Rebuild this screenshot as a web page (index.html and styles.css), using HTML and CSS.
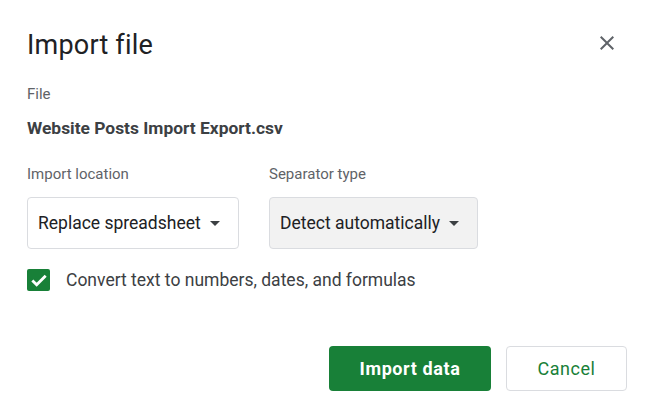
FILE: index.html
```html
<!DOCTYPE html>
<html>
<head>
<meta charset="utf-8">
<link rel="stylesheet" href="styles.css">
</head>
<body>
<div class="dialog">
  <div class="header">
    <h1 class="title">Import file</h1>
    <button class="close" aria-label="Close">
      <svg width="24" height="24" viewBox="0 0 24 24"><path d="M19 6.41L17.59 5 12 10.59 6.41 5 5 6.41 10.59 12 5 17.59 6.41 19 12 13.41 17.59 19 19 17.59 13.41 12z" fill="#5f6368"/></svg>
    </button>
  </div>
  <div class="label file-label">File</div>
  <div class="filename">Website Posts Import Export.csv</div>
  <div class="fields">
    <div class="field">
      <div class="label">Import location</div>
      <div class="select select-1">
        <span>Replace spreadsheet</span>
        <span class="arrow"></span>
      </div>
    </div>
    <div class="field">
      <div class="label">Separator type</div>
      <div class="select select-2">
        <span>Detect automatically</span>
        <span class="arrow"></span>
      </div>
    </div>
  </div>
  <label class="check-row">
    <span class="checkbox">
      <svg width="20" height="20" viewBox="0 0 24 24"><path d="M4 12.5l5.2 5.2L20 6.8" fill="none" stroke="#fff" stroke-width="3.4"/></svg>
    </span>
    <span class="check-text">Convert text to numbers, dates, and formulas</span>
  </label>
  <div class="actions">
    <button class="btn primary">Import data</button>
    <button class="btn secondary">Cancel</button>
  </div>
</div>
</body>
</html>
```

FILE: styles.css
```css
html, body {
  margin: 0;
  padding: 0;
  background: #fff;
}
body {
  font-family: Roboto, "Liberation Sans", Arial, sans-serif;
  color: #202124;
}
.dialog {
  width: 651px;
  height: 419px;
  box-sizing: border-box;
  padding: 29px 24px 0 27px;
}
.header {
  display: flex;
  justify-content: space-between;
  align-items: flex-start;
}
.title {
  margin: 0;
  font-size: 27px;
  line-height: 32px;
  font-weight: 400;
  color: #202124;
  letter-spacing: 0.2px;
}
.close {
  border: 0;
  background: none;
  padding: 0;
  margin: 2px 8px 0 0;
  width: 24px;
  height: 24px;
  display: flex;
}
.label {
  font-size: 15px;
  line-height: 20px;
  color: #5f6368;
}
.file-label {
  margin-top: 23px;
}
.filename {
  margin-top: 12px;
  font-size: 17.4px;
  line-height: 24px;
  font-weight: 700;
  color: #3c4043;
}
.fields {
  display: flex;
  gap: 30px;
  margin-top: 24px;
}
.field .label {
  margin-bottom: 13px;
}
.select {
  box-sizing: border-box;
  height: 52px;
  border: 1px solid #dadce0;
  border-radius: 4px;
  display: flex;
  align-items: center;
  justify-content: space-between;
  padding: 0 18px 0 10px;
  font-size: 17.5px;
  color: #202124;
}
.select-1 {
  width: 212px;
  background: #fff;
}
.select-2 {
  width: 209px;
  background: #f2f2f2;
}
.arrow {
  width: 0;
  height: 0;
  border-left: 5px solid transparent;
  border-right: 5px solid transparent;
  border-top: 5px solid #3c4043;
}
.check-row {
  display: flex;
  align-items: center;
  margin-top: 19px;
  gap: 16px;
}
.checkbox {
  width: 23px;
  height: 22px;
  border-radius: 2px;
  background: #188038;
  display: flex;
  align-items: center;
  justify-content: center;
}
.check-text {
  font-size: 17.5px;
  line-height: 24px;
  color: #3c4043;
}
.actions {
  display: flex;
  justify-content: flex-end;
  gap: 15px;
  margin-top: 54px;
}
.btn {
  box-sizing: border-box;
  height: 45px;
  border-radius: 4px;
  font-family: Roboto, "Liberation Sans", Arial, sans-serif;
  font-size: 18px;
  cursor: pointer;
}
.primary {
  width: 162px;
  background: #188038;
  border: 0;
  color: #fff;
  font-weight: 700;
  letter-spacing: 0.6px;
}
.secondary {
  width: 121px;
  background: #fff;
  border: 1px solid #dadce0;
  color: #188038;
  font-weight: 400;
  letter-spacing: 0.5px;
}
```
